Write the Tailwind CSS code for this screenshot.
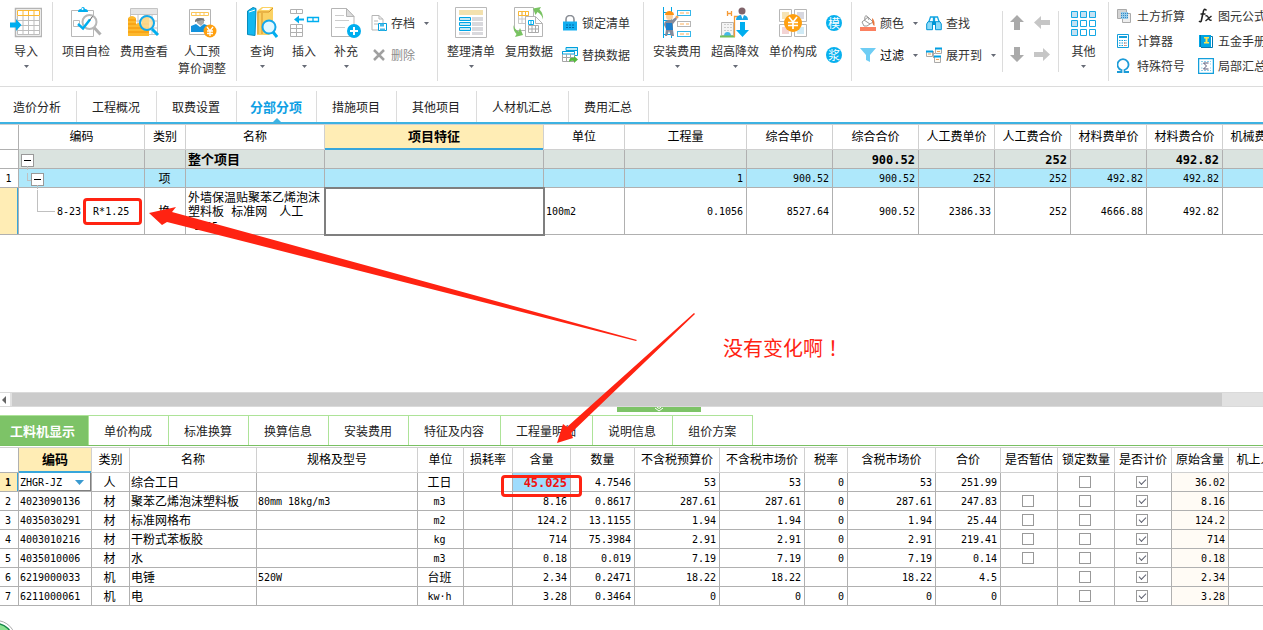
<!DOCTYPE html>
<html lang="zh-CN">
<head>
<meta charset="utf-8">
<meta name="viewport" content="width=device-width, initial-scale=1">
<title>分部分项</title>
<script src="https://cdn.jsdelivr.net/npm/@tailwindcss/browser@4"></script>
</head>
<body class="bg-white font-['Noto_Sans_CJK_SC',sans-serif] text-xs text-[#222]">
<svg class="hidden" aria-hidden="true">
  <symbol id="caret" viewBox="0 0 5 3"><path d="M0 0h5L2.500 3z" fill="#666a75"/></symbol>
</svg>
<div class="relative flex min-h-screen flex-col overflow-hidden">

  <!-- Ribbon -->
  <header class="flex h-[87px] overflow-hidden border-b border-[#dcdcdc] text-[#333] [&_button]:cursor-pointer [&_button]:whitespace-nowrap">
    <div class="flex shrink-0">
      <button class="flex w-[52px] flex-col items-center pt-[6px] leading-[17px]">
        <svg class="mb-1 size-8" viewBox="0 0 32 32" fill="none"><path d="M5.500 2.500h26v28h-26z" stroke="#b4b4b4" stroke-width="1.500" fill="#fff"/><path d="M7.500 14.500h22M7.500 19.500h22M7.500 24.500h22M7.500 10v18.500h22V10M13 10v18M18.500 10v18M24 10v18" stroke="#bdbdbd"/><path d="M7.500 4.500h22v5h-22zM13 4.500v5M18.500 4.500v5M24 4.500v5" stroke="#fbb934" fill="#fff"/><path d="M0 16.500h6V13l5.500 6L6 25v-3.500H0z" fill="#00aeef"/></svg>
        导入
        <svg class="mt-[6px] h-[3px] w-[5px]"><use href="#caret"/></svg>
      </button>
    </div>
    <div class="mt-0.5 h-[79px] w-px shrink-0 bg-[#dcdcdc]"></div>
    <div class="flex shrink-0 px-1 [&>button]:w-[58px]">
      <button class="flex flex-col items-center pt-[6px] leading-[17px]">
        <svg class="mb-1 size-8" viewBox="0 0 32 32" fill="none"><path d="M1.500 4.500h22v26h-22z" stroke="#b8b8b8" fill="#fff"/><path d="M8 6q0-3 3-3 .500-2 2-2t2 2q3 0 3 3z" fill="#00aeef"/><circle cx="12.500" cy="3" r="1" fill="#fff"/><path d="M3.500 14.500h6v6h-6z" stroke="#bbb"/><path d="M24 21.500l6.500 7" stroke="#b0b0b0" stroke-width="3"/><circle cx="19.500" cy="16" r="7" stroke="#b8b8b8" stroke-width="2" fill="#fff"/><path d="M8 18l5 4.500 7-9" stroke="#00aeef" stroke-width="2.500"/><path d="M19.500 14.500l3-4" stroke="#555"/></svg>
        项目自检
      </button>
      <button class="flex flex-col items-center pt-[6px] leading-[17px]">
        <svg class="mb-1 size-8" viewBox="0 0 32 32" fill="none"><path d="M2.500 2.500h27v26h-27z" stroke="#c4c4c4" fill="#fff"/><path d="M3 3h26v5H3z" fill="#e5e5e5"/><path d="M3 8.500h26M10 8v20M17 8v20M24 8v20M4 15h26M4 22h26" stroke="#c4c4c4"/><path d="M0 12q4-4 8 0v18H0zM8 18q3-2 6 0v12H8zM14 12q4-5 7 0v18h-7z" fill="#fdb92e"/><path d="M0 14h8M0 18h8M0 22h21M0 26h21M14 18h7" stroke="#f39200"/><circle cx="19" cy="17" r="7" stroke="#14a8ea" stroke-width="2" fill="#fde1a2" fill-opacity=".8"/><path d="M24 23l6 6" stroke="#00aeef" stroke-width="3"/></svg>
        费用查看
      </button>
      <button class="flex flex-col items-center pt-[6px] leading-[17px]">
        <svg class="mb-1 size-8" viewBox="0 0 32 32" fill="none"><path d="M3.500 3.500h21v25h-21z" stroke="#b4b4b4" fill="#fff"/><path d="M5.500 6.500h17v3h-17zM10 6.500v3M14 6.500v3M18 6.500v3" stroke="#fbc65a"/><path d="M5 26v-6l5-2 4 3 4-3 5 2v6z" fill="#1192dd"/><path d="M11 12h7v5l-3 3-4-3z" fill="#aaa"/><path d="M9 15q0-3 5-3 4 0 5 3l-3-1-7 2z" fill="#777"/><circle cx="24" cy="25" r="6.500" fill="#ff9f0f"/><path d="M21 21l3 4 3-4M21 25h6M21 27.500h6M24 25v5" stroke="#fff" stroke-width="1.300"/></svg>
        人工预<br>算价调整
      </button>
    </div>
    <div class="mt-0.5 ml-px h-[79px] w-px shrink-0 bg-[#dcdcdc]"></div>
    <div class="flex w-[200px] shrink-0 pl-1">
      <button class="flex w-[42px] flex-col items-center pt-[6px] leading-[17px]">
        <svg class="mb-1 size-8" viewBox="0 0 32 32"><path d="M1.500 5L7 1.500l3 1-1 27-7.500-1z" fill="#12b8f0" stroke="#088bbb"/><path d="M3 6l6-2" stroke="#fff" stroke-width="1"/><path d="M11 5l5-4h11v24l-4 4H11z" fill="#fbd264"/><path d="M12 6h11l4-4M16 7v21M12 6v22" stroke="#d79327" fill="none"/><path d="M17 2h8l-2 2h-8z" fill="#fff"/><circle cx="23" cy="21" r="6.500" stroke="#14a8ea" stroke-width="2" fill="#e3f8ff"/><path d="M27 26l4 5" stroke="#00aeef" stroke-width="3"/></svg>
        查询
        <svg class="mt-[6px] h-[3px] w-[5px]"><use href="#caret"/></svg>
      </button>
      <button class="flex w-[42px] flex-col items-center pt-[6px] leading-[17px]">
        <svg class="mb-1 size-8" viewBox="0 0 32 32" fill="none"><path d="M2.500 3.500h12v4h-12zM8.500 3.500v4M2.500 18.500h12v12h-12zM8.500 18.500v12M2.500 22.500h12M2.500 26.500h12" stroke="#b0b0b0"/><path d="M19.500 11.500h11v4h-11zM25 11.500v4" stroke="#00aeef" stroke-width="1.300"/><path d="M6 13.500l5-4v3h5v2h-5v3z" fill="#00aeef"/></svg>
        插入
        <svg class="mt-[6px] h-[3px] w-[5px]"><use href="#caret"/></svg>
      </button>
      <button class="flex w-[42px] flex-col items-center pt-[6px] leading-[17px]">
        <svg class="mb-1 size-8" viewBox="0 0 32 32" fill="none"><path d="M1.500 2.500h15l7.500 8v20H1.500z" stroke="#b5b5b5" fill="#fff"/><path d="M16.500 2.500v8H24z" fill="#ddd" stroke="#b5b5b5"/><path d="M5 9.500h9M5 14.500h14M5 21.500h10" stroke="#ccc"/><circle cx="24" cy="25" r="7" fill="#00aeef"/><path d="M20 25h8M24 21v8" stroke="#fff" stroke-width="2"/></svg>
        补充
        <svg class="mt-[6px] h-[3px] w-[5px]"><use href="#caret"/></svg>
      </button>
      <div class="flex flex-col gap-3 pt-[13px] leading-5">
        <button class="flex items-center gap-1 pl-1">
          <svg class="size-4" viewBox="0 0 16 16" fill="none"><path d="M1 .500h7l4 4V15H1z" stroke="#b5b5b5"/><path d="M8 .500V4h4M3 6h4M3 9h4" stroke="#b5b5b5"/><path d="M7.500 8.500h8v7h-8z" stroke="#00a0dd" fill="#fff"/><path d="M9 8.500h4v3H9zM9 13.500h5v2H9z" fill="#44b9e8"/></svg>
          存档<svg class="ml-[5px] h-[3px] w-[5px]"><use href="#caret"/></svg>
        </button>
        <button class="flex items-center gap-1 pl-1 text-[#8c8c8c]">
          <svg class="size-4" viewBox="0 0 16 16" fill="none"><path d="M3 3l10 10M13 3L3 13" stroke="#a0a0a0" stroke-width="2.500"/></svg>删除
        </button>
      </div>
    </div>
    <div class="mt-0.5 h-[79px] w-px shrink-0 bg-[#dcdcdc]"></div>
    <div class="flex w-[205px] shrink-0 pl-1">
      <button class="flex w-[58px] flex-col items-center pt-[6px] leading-[17px]">
        <svg class="mb-1 size-8" viewBox="0 0 32 32" fill="none"><path d="M.500 1.500h31v30H.500z" stroke="#b9b9b9" fill="#fff"/><path d="M4 4h24v5H4z" fill="#f3e1ae"/><path d="M17 11h11v4H17zM17 16h11v4H17zM17 21h11v4H17zM17 26h11v3H17zM4 26h11v3H4z" fill="#d9d9dd"/><path d="M4.500 11.500h11v3h-11zM4.500 16.500h11v3h-11zM4.500 21.500h11v3h-11z" stroke="#00a5e5" fill="#c5e9f5"/></svg>
        整理清单
        <svg class="mt-[6px] h-[3px] w-[5px]"><use href="#caret"/></svg>
      </button>
      <button class="flex w-[58px] flex-col items-center pt-[6px] leading-[17px]">
        <svg class="mb-1 size-8" viewBox="0 0 32 32" fill="none"><path d="M1.500 1.500h19v23h-19z" stroke="#b5b5b5" fill="#fff"/><path d="M5.500 5.500h10v12h-10zM9 6v11M12.500 6v11M6 13h9" stroke="#c8c8c8"/><path d="M5.500 5.500h10v4h-10zM9 5.500v4M12.500 5.500v4" stroke="#fbb934"/><path d="M12.500 10.500h10l7 7v13h-17z" stroke="#b5b5b5" fill="#fff"/><path d="M22.500 10.500v7h7" stroke="#b5b5b5"/><path d="M15.500 14.500h5v4h-5zM18 14v5" stroke="#00aeef"/><path d="M15.500 19.500h10v7h-10zM19 19v8M22.500 19v8M15.500 23h10" stroke="#aaa"/><path d="M20 2.500l8-1.500-1.500 2.500q4 4 3.500 10-1-5-5.500-7.500L22.500 9zM10 29l-8 2 1.500-3q-3.500-3-3-9 1 4 5 6.500L7 22z" fill="#79c362"/></svg>
        复用数据
      </button>
      <div class="flex flex-col gap-3 pt-[13px] leading-5">
        <button class="flex items-center gap-1 pl-1">
          <svg class="size-4" viewBox="0 0 16 16" fill="none"><path d="M4 7V4.500a4 4 0 018 0V7" stroke="#8b8f96" stroke-width="1.600"/><path d="M1 6.500h14v9H1z" fill="#12aef0"/><path d="M4 10h8M4 12.500h8" stroke="#0068a8" stroke-dasharray="2 1"/></svg>锁定清单
        </button>
        <button class="flex items-center gap-1 pl-1">
          <svg class="size-4" viewBox="0 0 16 16" fill="none"><path d="M4 .500h11.500v8H13" stroke="#00a0dd"/><path d="M4 .500h11.500v3H4z" fill="#bdeaf8" stroke="#00a0dd"/><path d="M.500 4.500h12v10H.500z" stroke="#a5a5a5" fill="#fff"/><path d="M.500 4.500h12v2.500H.500z" stroke="#00a0dd" fill="#fff"/><path d="M.500 10.500h12M4.500 7v8M8.500 7v8" stroke="#a5a5a5"/><path d="M7 15q0-5 5-4V9l4 3.500-4 3.500v-2q-3-1-5 1z" fill="#55b83c"/></svg>替换数据
        </button>
      </div>
    </div>
    <div class="mt-0.5 h-[79px] w-px shrink-0 bg-[#dcdcdc]"></div>
    <div class="flex w-[207px] shrink-0 pl-1">
      <button class="flex w-[58px] flex-col items-center pt-[6px] leading-[17px]">
        <svg class="mb-1 size-8" viewBox="0 0 32 32" fill="none"><path d="M2.500 1v31M10.500 1v31M2 6.500h9M2 14.500h9M2 28.500h9" stroke="#00a5e5"/><rect x="16.500" y="4.500" width="13" height="5" stroke="#35b6e9"/><rect x="16.500" y="15.500" width="13" height="5" stroke="#b5b5b5"/><rect x="16.500" y="25.500" width="13" height="5" stroke="#35b6e9"/><path d="M19 7h4m2 0h3M19 18h4m2 0h3M19 28h4m2 0h3" stroke="#fbb05a"/><path d="M3 19q0-4 4-5h4l4-3 1 2-4 5v6l1 6h-3l-2-5-2 5H4l1-7z" fill="#858b9b"/><path d="M5 17h6l1 7H5z" fill="#1b7fcd"/><circle cx="8.500" cy="10.500" r="3.500" fill="#fcd2a2"/><path d="M4 9a4.500 4 0 019 0z" fill="#ff9412"/><circle cx="16" cy="11" r="1.500" fill="#f5a55a"/></svg>
        安装费用
        <svg class="mt-[6px] h-[3px] w-[5px]"><use href="#caret"/></svg>
      </button>
      <button class="flex w-[58px] flex-col items-center pt-[6px] leading-[17px]">
        <svg class="mb-1 size-8" viewBox="0 0 32 32" fill="none"><path d="M2.500 16.500h12v13h-12z" stroke="#b5b5b5" fill="#f4f4f4"/><path d="M5 18.500h8M5 21.500h8M5 24.500h8" stroke="#ccc" stroke-dasharray="2 1"/><path d="M5 30q0-4 3.500-4t3.500 4z" fill="#43b9e8"/><path d="M1 30.500h15" stroke="#72c05c" stroke-width="2"/><path d="M15.500 31V10.500h4M8.500 5v5M12.500 5v5M8.500 7.500h4" stroke="#f59a35" stroke-width="1.300"/><circle cx="23" cy="5" r="3.500" fill="#80636a"/><path d="M17 14q0-5 6-5t6 5z" fill="#1aa6e6"/><path d="M21 16h5v8h4l-6.500 7-6.500-7h4z" fill="#00aeef"/><path d="M22 9l1.500 4L25 9" fill="#fff"/></svg>
        超高降效
        <svg class="mt-[6px] h-[3px] w-[5px]"><use href="#caret"/></svg>
      </button>
      <button class="flex w-[58px] flex-col items-center pt-[6px] leading-[17px]">
        <svg class="mb-1 size-8" viewBox="0 0 32 32" fill="none"><path d="M2.500 3.500h12v12h-12zM17.500 3.500h12v12h-12zM2.500 18.500h12v12h-12zM17.500 18.500h12v12h-12z" stroke="#b7b7b7"/><path d="M5 6h7v7H5z" fill="#f5e3b5"/><path d="M20 6h7v7h-7z" fill="#d7d7df"/><path d="M5 21h7v7H5z" fill="#f3d3d3"/><path d="M20 21h7v7h-7z" fill="#cfeaf6"/><circle cx="16" cy="17" r="9" fill="#ff9f0f"/><path d="M12 11l4 5 4-5M11 16.500h10M11 19.500h10M16 16v7" stroke="#fff" stroke-width="1.700"/></svg>
        单价构成
      </button>
      <div class="flex flex-col gap-4 pt-[15px] pl-1">
        <button class="grid size-4 place-items-center rounded-full bg-[#08b0ee] text-[12px] leading-4 text-white">模</button>
        <button class="grid size-4 place-items-center rounded-full bg-[#08b0ee] text-[12px] leading-4 text-white">浆</button>
      </div>
    </div>
    <div class="mt-0.5 h-[79px] w-px shrink-0 bg-[#dcdcdc]"></div>
    <div class="flex w-[150px] shrink-0 gap-2 pt-[13px] pl-2 leading-5">
      <div class="flex flex-col gap-3">
        <button class="flex items-center gap-1">
          <svg class="size-4" viewBox="0 0 16 16" fill="none"><path d="M2 7l6-5 5 5-6 4H4z" stroke="#999" fill="#fff"/><path d="M5 5q-1-5 2-4l2 4M4 5l6 4" stroke="#999"/><path d="M12 3q3 2 2.500 8Q12 10 12 3z" fill="#e8743a"/><path d="M0 12h16v4H0z" fill="#fb8060"/></svg>颜色<svg class="ml-[5px] h-[3px] w-[5px]"><use href="#caret"/></svg>
        </button>
        <button class="flex items-center gap-1 text-black">
          <svg class="size-4" viewBox="0 0 16 16"><path d="M0 1h16L10 8v7l-4-2V8z" fill="#6fcdf4"/></svg>过滤<svg class="ml-[5px] h-[3px] w-[5px]"><use href="#caret"/></svg>
        </button>
      </div>
      <div class="flex flex-col gap-3">
        <button class="flex items-center gap-1">
          <svg class="size-4" viewBox="0 0 16 16" fill="none"><path d="M2.500 8l2-6h3v5M8.500 7V2h3l2 6M7 4h2" stroke="#12a5e2" stroke-width="1.300"/><path d="M.700 9L2 6.700h4.500v8H.700zM9.500 6.700H14L15.300 9v5.700H9.500z" fill="#8cdaf8" stroke="#0096d6"/><path d="M6.500 6h3v4h-3z" fill="#0096d6"/></svg>查找
        </button>
        <button class="flex items-center gap-1">
          <svg class="size-4" viewBox="0 0 16 16" fill="none"><path d="M6 6.500h3M7.500 4v7" stroke="#aaa"/><path d="M.500 4.500h6v5h-6zM9.500 1.500h6v5h-6zM8.500 9.500h6v6h-6z" stroke="#aaa" fill="#fffaf2"/><path d="M0 4.500h7M9 1.500h7M8 9.500h7" stroke="#009fe3" stroke-width="2"/><path d="M2 7h3M11 4.500h3M10 12.500h3" stroke="#f0a35a"/></svg>展开到<svg class="ml-[5px] h-[3px] w-[5px]"><use href="#caret"/></svg>
        </button>
      </div>
    </div>
    <div class="mt-[11px] h-[61px] w-px shrink-0 bg-[#dcdcdc]"></div>
    <div class="grid w-[55px] shrink-0 grid-cols-[16px_16px] content-start gap-x-[9px] gap-y-4 pt-[15px] pl-[6px] [&_svg]:size-4">
      <button aria-label="上移"><svg viewBox="0 0 16 16"><path d="M8 0l7 7h-4v8H5V7H1z" fill="#aaa"/></svg></button>
      <button aria-label="升级"><svg viewBox="0 0 16 16"><path d="M0 7.500L7 1v4h9v5H7v4z" fill="#c6c6c6"/></svg></button>
      <button aria-label="下移"><svg viewBox="0 0 16 16"><path d="M8 15l7-7h-4V0H5v8H1z" fill="#aaa"/></svg></button>
      <button aria-label="降级"><svg viewBox="0 0 16 16"><path d="M16 7.500L9 1v4H0v5h9v4z" fill="#c6c6c6"/></svg></button>
    </div>
    <div class="mt-[11px] h-[61px] w-px shrink-0 bg-[#dcdcdc]"></div>
    <button class="flex w-[49px] shrink-0 flex-col items-center pt-[6px] leading-[17px]">
      <svg class="mb-1 size-8" viewBox="0 0 32 32" fill="#fff" stroke="#15a9e5"><g fill="#c5e2f3"><path d="M3.500 5.500h6v6h-6zM12.500 5.500h6v6h-6zM21.500 5.500h6v6h-6zM3.500 14.500h6v6h-6zM3.500 23.500h6v6h-6z"/></g><path d="M12.500 14.500h6v6h-6zM21.500 14.500h6v6h-6zM12.500 23.500h6v6h-6zM21.500 23.500h6v6h-6z"/></svg>
      其他
      <svg class="mt-[6px] h-[3px] w-[5px]"><use href="#caret"/></svg>
    </button>
    <div class="mt-0.5 h-[79px] w-px shrink-0 bg-[#dcdcdc]"></div>
    <div class="grid shrink-0 grid-cols-[77px_auto] content-start gap-x-1 gap-y-[5px] pt-[6px] pl-2 leading-5 [&>button]:flex [&>button]:items-center [&>button]:gap-1 [&_svg]:size-4">
      <button><svg viewBox="0 0 16 16" fill="none"><path d="M.500 1.500h9v9h-9z" fill="#d4d4d4" stroke="#aaa"/><path d="M5.500 5.500h8v9h-8z" fill="#eee" stroke="#aaa"/><path d="M4 4h7v7H4z" fill="#9bcdea"/><path d="M4 5.500h7M4 7.500h7M4 9.500h7" stroke="#3489c6" stroke-dasharray="1 1"/></svg>土方折算</button>
      <button><svg viewBox="0 0 16 16" fill="none" stroke="#222"><path d="M8.500 2.500Q6-1 5 5L3.500 12Q3 15 1 13M2.500 6h5" stroke-width="1.600"/><path d="M7.500 8q2-1 3 2t3 2M13.500 8l-6 5" stroke-width="1.400"/></svg>图元公式</button>
      <button><svg viewBox="0 0 16 16" fill="none"><path d="M.500 1.500h11v13h-11z" stroke="#149fdb" fill="#fff"/><path d="M2 3h8v2H2z" fill="#149fdb"/><path d="M2 7.500h8M2 10h8M2 12.500h8" stroke="#149fdb" stroke-dasharray="1.500 1"/><path d="M7 10h3M7 12.500h3" stroke="#ee8064" stroke-dasharray="1.500 1"/></svg>计算器</button>
      <button><svg viewBox="0 0 16 16"><path d="M1 2h12v12H1z" fill="#00a5e5"/><path d="M2.500 2v12M13 3.500h1.500v11H3" stroke="#0577ad" fill="none"/><path d="M6 4h5v1.500H9.500V9H11v1.500H6V9h1.500V5.500H6z" fill="#ffe44f"/></svg>五金手册</button>
      <button><svg viewBox="0 0 16 16"><path d="M0 14h4.500v-2A5.500 5.500 0 117.500 12v2H12" fill="none" stroke="#1c9bd7" stroke-width="1.800"/></svg>特殊符号</button>
      <button><svg viewBox="0 0 16 16" fill="none"><path d="M.500.500h15v15H.500z" stroke="#149fdb" stroke-width="1.500"/><path d="M3 3.500h10M3 6h10M3 10h10M3 12.500h10" stroke="#8dcdea" stroke-dasharray="2 1"/><path d="M4.500 4h7v8h-7z" fill="#fff"/><path d="M10.500 5h-5l3 3-3 3h5" stroke="#557"/></svg>局部汇总</button>
    </div>
  </header>

  <!-- Main tabs -->
  <nav class="flex border-b-2 border-[#3db2e2] pt-1 text-[#222] [&>button]:h-[31px] [&>button]:border-r [&>button]:border-[#dcdcdc] [&>button]:whitespace-nowrap">
    <button class="pr-[15px] pl-[13px]">造价分析</button>
    <button class="pr-4 pl-[15px]">工程概况</button>
    <button class="pr-4 pl-[15px]">取费设置</button>
    <button class="relative pr-[14px] pl-[13px] text-[13px] font-bold text-[#0f9fe4]">分部分项<svg class="absolute bottom-0 left-1/2 h-1 w-2 -translate-x-1/2" viewBox="0 0 8 4"><path d="M0 4l4-4 4 4z" fill="#3db2e2"/></svg></button>
    <button class="pr-4 pl-[15px]">措施项目</button>
    <button class="pr-4 pl-[15px]">其他项目</button>
    <button class="pr-4 pl-[15px]">人材机汇总</button>
    <button class="pr-4 pl-[15px]">费用汇总</button>
  </nav>

  <!-- Bill items -->
  <main class="flex-1 overflow-hidden border-t border-[#d0d0d0] bg-white">
    <table class="w-[1299px] table-fixed border-separate border-spacing-0 font-['DejaVu_Sans_Mono','Noto_Sans_CJK_SC',monospace] text-[10px] text-black [&_tbody_td]:pt-[2px] [&_td]:border-r [&_td]:border-b [&_td]:border-[#b0b0b0] [&_td]:pr-[3px] [&_td]:pl-[2px] [&_td]:text-right [&_td]:leading-[14px] [&_th]:border-r [&_th]:border-b [&_th]:border-[#d0d0d0] [&_th]:text-xs [&_th]:font-normal [&_th]:whitespace-nowrap">
      <colgroup><col class="w-[19px]"><col class="w-[126px]"><col class="w-[41px]"><col class="w-[139px]"><col class="w-[219px]"><col class="w-[81px]"><col class="w-[122px]"><col class="w-[86px]"><col class="w-[86px]"><col class="w-[76px]"><col class="w-[76px]"><col class="w-[76px]"><col class="w-[76px]"><col class="w-[76px]"></colgroup>
      <thead><tr class="h-[25px]"><td></td><th>编码</th><th>类别</th><th>名称</th><th class="bg-[#ffedb5]"><span class="block h-[25px] -mb-px border-b-2 border-[#38a6db] text-[13px] leading-6 font-bold">项目特征</span></th><th>单位</th><th>工程量</th><th>综合单价</th><th>综合合价</th><th>人工费单价</th><th>人工费合价</th><th>材料费单价</th><th>材料费合价</th><th>机械费单价</th></tr></thead>
      <tbody>
        <tr class="h-[19px] bg-[#dae3df] text-xs font-bold"><td class="bg-white"></td>
          <td><button aria-label="折叠" class="relative block size-[13px] border border-[#999] bg-white before:absolute before:top-[5px] before:left-[2px] before:h-px before:w-[7px] before:bg-black after:absolute after:top-full after:left-[5px] after:h-1 after:w-px after:bg-[#c0c0c0]"></button></td>
          <td></td><td><span class="block text-left text-[13px]">整个项目</span></td><td></td><td></td><td></td><td></td><td>900.52</td><td></td><td>252</td><td></td><td>492.82</td><td></td></tr>
        <tr class="h-[19px] bg-[#aee8fb]"><td class="bg-white"><span class="block text-center">1</span></td>
          <td><div class="flex"><span class="ml-[6px] h-2 w-1 border-b border-l border-[#c0c0c0]"></span><button aria-label="折叠" class="relative block size-[13px] border border-[#999] bg-white before:absolute before:top-[5px] before:left-[2px] before:h-px before:w-[7px] before:bg-black after:absolute after:top-full after:left-[5px] after:h-1 after:w-px after:bg-[#c0c0c0]"></button></div></td>
          <td><span class="block text-center text-xs leading-[14px]">项</span></td><td></td><td></td><td></td><td>1</td><td>900.52</td><td>900.52</td><td>252</td><td>252</td><td>492.82</td><td>492.82</td><td></td></tr>
        <tr class="h-[47px]"><td class="bg-[#ffedb5] shadow-[inset_-1px_0_0_#38a6db]"></td>
          <td><div class="flex h-11 items-center"><span class="ml-4 h-[22px] w-[18px] self-start border-b border-l border-[#c0c0c0]"></span><span class="ml-[2px]">8-23</span><span class="ml-3">R*1.25</span></div></td>
          <td><span class="block text-center text-xs leading-[14px]">换</span></td>
          <td><span class="block text-left text-xs leading-[14px] whitespace-nowrap">外墙保温贴聚苯乙烯泡沫<br>塑料板&nbsp;标准网　人工<br><span class="text-[10px]">*1.25</span></span></td>
          <td class="outline-2 -outline-offset-1 outline-[#7f7f7f]"></td><td><span class="block text-left">100m2</span></td><td>0.1056</td><td>8527.64</td><td>900.52</td><td>2386.33</td><td>252</td><td>4666.88</td><td>492.82</td><td></td></tr>
      </tbody>
    </table>
  </main>

  <!-- Horizontal scroll bar and pane splitter -->
  <div class="flex h-[15px] border-y border-[#dadada] bg-[#e1e1e1]">
    <button aria-label="向左滚动" class="w-[10px] bg-white"><svg class="h-2 w-[10px]" viewBox="0 0 10 8"><path d="M6 0v8L2 4z" fill="#666"/></svg></button>
    <div class="mr-[41px] ml-0.5 flex-1 bg-[#cbcbcb]"></div>
  </div>
  <div class="flex h-2"><button aria-label="收起" class="ml-[617px] grid h-[5px] w-[84px] place-items-center bg-[#7dc367]"><svg class="h-[5px] w-[10px]" viewBox="0 0 10 5" fill="none" stroke="#fff"><path d="M3 0l2 1.500L7 0M1 1l4 3 4-3"/></svg></button></div>

  <!-- Detail tabs -->
  <nav class="flex border-b border-[#79c062] text-[#222] [&>button]:h-[30px] [&>button]:border-t [&>button]:border-r [&>button]:border-[#ade398] [&>button]:whitespace-nowrap">
    <button class="bg-[#7dc367] pr-[13px] pl-[10px] text-[13px] font-bold text-white">工料机显示</button>
    <button class="pr-4 pl-[15px]">单价构成</button>
    <button class="pr-4 pl-[15px]">标准换算</button>
    <button class="pr-4 pl-[15px]">换算信息</button>
    <button class="pr-4 pl-[15px]">安装费用</button>
    <button class="pr-4 pl-[15px]">特征及内容</button>
    <button class="pr-4 pl-[15px]">工程量明细</button>
    <button class="pr-4 pl-[15px]">说明信息</button>
    <button class="pr-4 pl-[15px]">组价方案</button>
  </nav>

  <!-- Resources of the selected item -->
  <section class="mt-px overflow-hidden border-t border-[#d0d0d0] pb-6">
    <table class="w-[1293px] table-fixed border-separate border-spacing-0 font-['DejaVu_Sans_Mono','Noto_Sans_CJK_SC',monospace] text-[10px] text-black [&_input]:mx-auto [&_input]:mb-[3px] [&_input]:block [&_input]:size-3 [&_input]:appearance-none [&_input]:border [&_input]:border-[#999] [&_input]:bg-white [&_input]:before:mx-auto [&_input]:before:mt-[2px] [&_input]:before:hidden [&_input]:before:h-1 [&_input]:before:w-[7px] [&_input]:before:-rotate-45 [&_input]:before:border-b [&_input]:before:border-l [&_input]:before:border-[#5f6270] [&_input:checked]:before:block [&_tbody_td]:pt-[2px] [&_tbody_tr]:h-[19px] [&_td]:border-r [&_td]:border-b [&_td]:border-[#b0b0b0] [&_td]:pr-[3px] [&_td]:pl-px [&_td]:text-right [&_td]:leading-[14px] [&_td]:whitespace-nowrap [&_th]:border-r [&_th]:border-b [&_th]:border-[#d0d0d0] [&_th]:text-xs [&_th]:font-normal [&_th]:whitespace-nowrap [&_i]:block [&_i]:text-center [&_i]:not-italic [&_b]:block [&_b]:text-center [&_b]:text-xs [&_b]:leading-[14px] [&_b]:font-normal [&_p]:text-left [&_p]:text-xs [&_p]:leading-[14px] [&_span]:block [&_span]:text-left">
      <colgroup><col class="w-[19px]"><col class="w-[73px]"><col class="w-[38px]"><col class="w-[127px]"><col class="w-[161px]"><col class="w-[46px]"><col class="w-[49px]"><col class="w-[58px]"><col class="w-[64px]"><col class="w-[85px]"><col class="w-[85px]"><col class="w-[43px]"><col class="w-[88px]"><col class="w-[65px]"><col class="w-[57px]"><col class="w-[57px]"><col class="w-[57px]"><col class="w-[57px]"><col class="w-[64px]"></colgroup>
      <thead><tr class="h-[25px]"><td></td><th class="bg-[#ffedb5]"><div class="-mb-px h-[25px] border-b-2 border-[#38a6db] text-[13px] leading-6 font-bold">编码</div></th><th>类别</th><th>名称</th><th>规格及型号</th><th>单位</th><th>损耗率</th><th>含量</th><th>数量</th><th>不含税预算价</th><th>不含税市场价</th><th>税率</th><th>含税市场价</th><th>合价</th><th>是否暂估</th><th>锁定数量</th><th>是否计价</th><th>原始含量</th><th>机上人工</th></tr></thead>
      <tbody>
        <tr><td class="bg-[#ffedb5] font-bold shadow-[inset_-1px_0_0_#38a6db]"><i>1</i></td>
          <td class="shadow-[inset_-1px_-1px_0_#7f7f7f]"><div class="relative"><select aria-label="编码" class="block h-[14px] w-full appearance-none leading-[14px]"><option>ZHGR-JZ</option></select><svg class="pointer-events-none absolute top-1 right-1 h-[5px] w-[9px]" viewBox="0 0 9 5"><path d="M0 0h9L4.500 5z" fill="#3a9ad0"/></svg></div></td>
          <td><b>人</b></td><td><p>综合工日</p></td><td></td><td><b>工日</b></td><td></td><td class="bg-[#9fdcfd] text-xs font-bold text-[#f01010]">45.025</td><td>4.7546</td><td>53</td><td>53</td><td>0</td><td>53</td><td>251.99</td><td></td><td><input type="checkbox" aria-label="锁定数量 1"></td><td><input type="checkbox" checked aria-label="是否计价 1"></td><td class="bg-[#fffbf5]">36.02</td><td></td></tr>
        <tr><td><i>2</i></td><td><span>4023090136</span></td><td><b>材</b></td><td><p>聚苯乙烯泡沫塑料板</p></td><td><span>80mm 18kg/m3</span></td><td><i>m3</i></td><td></td><td>8.16</td><td>0.8617</td><td>287.61</td><td>287.61</td><td>0</td><td>287.61</td><td>247.83</td><td><input type="checkbox" aria-label="是否暂估 2"></td><td><input type="checkbox" aria-label="锁定数量 2"></td><td><input type="checkbox" checked aria-label="是否计价 2"></td><td class="bg-[#fffbf5]">8.16</td><td></td></tr>
        <tr><td><i>3</i></td><td><span>4035030291</span></td><td><b>材</b></td><td><p>标准网格布</p></td><td></td><td><i>m2</i></td><td></td><td>124.2</td><td>13.1155</td><td>1.94</td><td>1.94</td><td>0</td><td>1.94</td><td>25.44</td><td><input type="checkbox" aria-label="是否暂估 3"></td><td><input type="checkbox" aria-label="锁定数量 3"></td><td><input type="checkbox" checked aria-label="是否计价 3"></td><td class="bg-[#fffbf5]">124.2</td><td></td></tr>
        <tr><td><i>4</i></td><td><span>4003010216</span></td><td><b>材</b></td><td><p>干粉式苯板胶</p></td><td></td><td><i>kg</i></td><td></td><td>714</td><td>75.3984</td><td>2.91</td><td>2.91</td><td>0</td><td>2.91</td><td>219.41</td><td><input type="checkbox" aria-label="是否暂估 4"></td><td><input type="checkbox" aria-label="锁定数量 4"></td><td><input type="checkbox" checked aria-label="是否计价 4"></td><td class="bg-[#fffbf5]">714</td><td></td></tr>
        <tr><td><i>5</i></td><td><span>4035010006</span></td><td><b>材</b></td><td><p>水</p></td><td></td><td><i>m3</i></td><td></td><td>0.18</td><td>0.019</td><td>7.19</td><td>7.19</td><td>0</td><td>7.19</td><td>0.14</td><td><input type="checkbox" aria-label="是否暂估 5"></td><td><input type="checkbox" aria-label="锁定数量 5"></td><td><input type="checkbox" checked aria-label="是否计价 5"></td><td class="bg-[#fffbf5]">0.18</td><td></td></tr>
        <tr><td><i>6</i></td><td><span>6219000033</span></td><td><b>机</b></td><td><p>电锤</p></td><td><span>520W</span></td><td><b>台班</b></td><td></td><td>2.34</td><td>0.2471</td><td>18.22</td><td>18.22</td><td></td><td>18.22</td><td>4.5</td><td></td><td><input type="checkbox" aria-label="锁定数量 6"></td><td><input type="checkbox" checked aria-label="是否计价 6"></td><td class="bg-[#fffbf5]">2.34</td><td></td></tr>
        <tr><td><i>7</i></td><td><span>6211000061</span></td><td><b>机</b></td><td><p>电</p></td><td></td><td><i>kw·h</i></td><td></td><td>3.28</td><td>0.3464</td><td>0</td><td>0</td><td>0</td><td>0</td><td>0</td><td></td><td><input type="checkbox" aria-label="锁定数量 7"></td><td><input type="checkbox" checked aria-label="是否计价 7"></td><td class="bg-[#fffbf5]">3.28</td><td></td></tr>
      </tbody>
    </table>
  </section>

  <!-- Floating assistant bubble -->
  <svg class="absolute bottom-0 left-0 h-[10px] w-4" viewBox="0 0 16 10"><circle cx="-4" cy="20" r="19.500" fill="#fff" stroke="#aaa"/><circle cx="-4" cy="20" r="16.500" fill="#8be28f" stroke="#16864a" stroke-width="1.500"/></svg>

  <!-- Review marks -->
  <div class="pointer-events-none absolute top-[198px] left-[83px] h-[27px] w-[59px] rounded-[4px] border-3 border-[#ff2312]"></div>
  <div class="pointer-events-none absolute top-[475px] left-[501px] h-[22px] w-[81px] rounded-[4px] border-3 border-[#ff2312]"></div>
  <svg class="pointer-events-none absolute top-0 left-0 h-[630px] w-[1263px]" viewBox="0 0 1263 630" fill="#ff2312">
    <path d="M149 213L176 207L172 212L637 340L636 341L167 222L162 225Z"/>
    <path d="M557 443L563 424L567 427L694 313L695 314L571 433L573 438Z"/>
  </svg>
  <p class="pointer-events-none absolute top-[334px] left-[723px] text-xl leading-7 whitespace-nowrap text-[#ff2312]">没有变化啊<span lang="zh-TW" class="font-['Noto_Sans_CJK_TC',sans-serif]">！</span></p>
</div>
</body>
</html>
